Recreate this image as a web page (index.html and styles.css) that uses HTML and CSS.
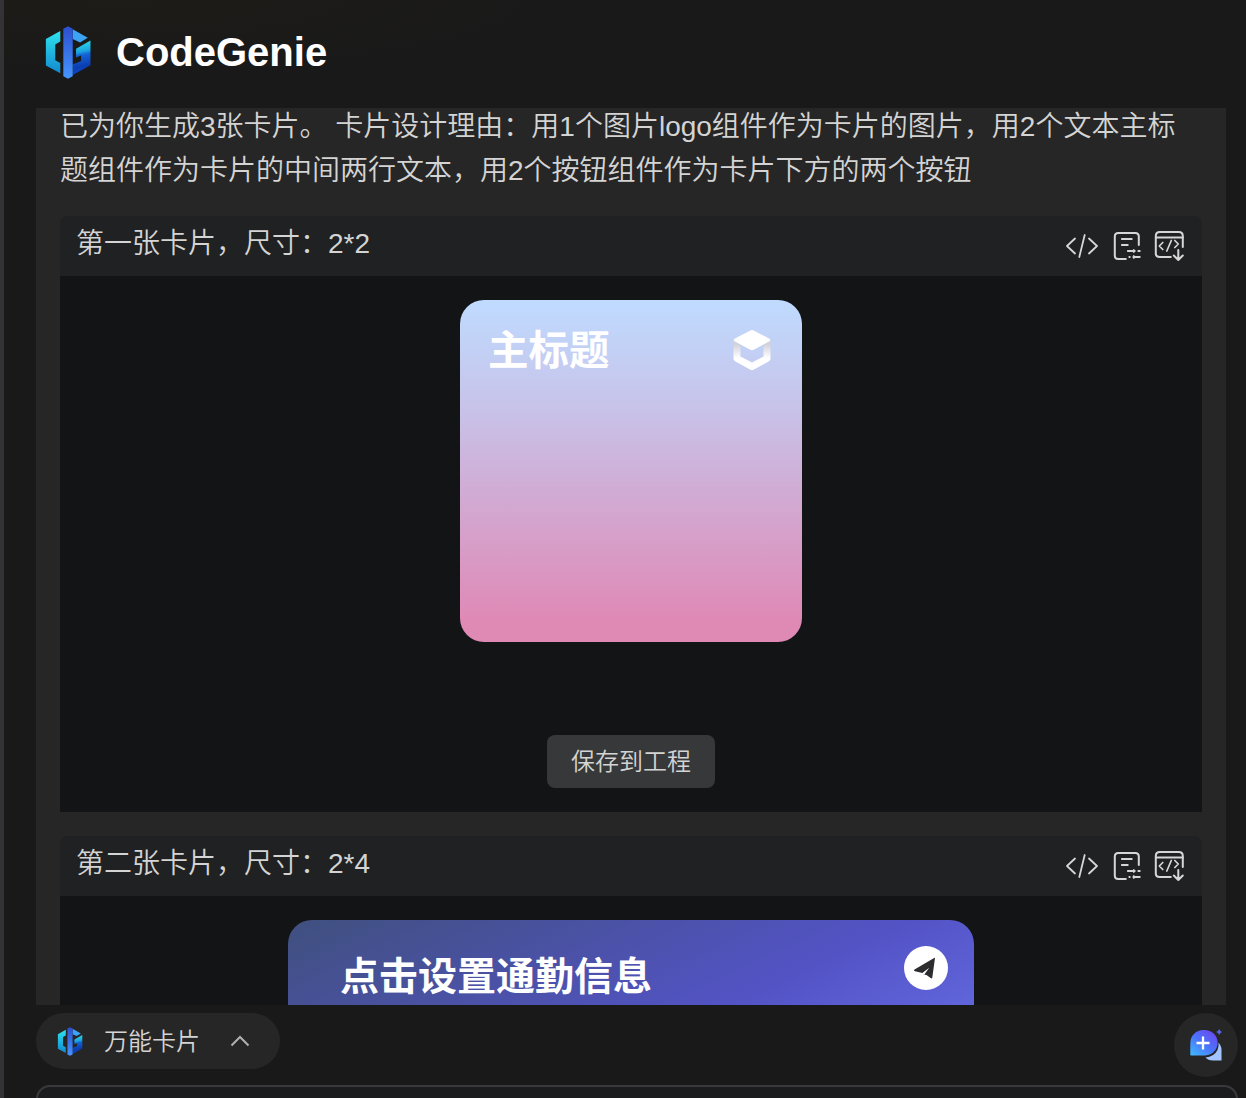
FILE: index.html
```html
<!DOCTYPE html>
<html lang="zh-CN">
<head>
<meta charset="utf-8">
<title>CodeGenie</title>
<link rel="stylesheet" href="styles.css">
</head>
<body>
<svg class="defs" width="0" height="0" aria-hidden="true">
  <defs>
    <linearGradient id="g-left" x1="0" y1="0" x2="0" y2="1"><stop offset="0" stop-color="#2fe3ee"/><stop offset="1" stop-color="#1189cf"/></linearGradient>
    <linearGradient id="g-bar" x1="0" y1="0" x2="0" y2="1"><stop offset="0" stop-color="#2b4fd0"/><stop offset="1" stop-color="#4596ff"/></linearGradient>
    <linearGradient id="g-right" x1=".5" y1="0" x2=".6" y2="1"><stop offset="0" stop-color="#2ee0ec"/><stop offset=".32" stop-color="#1ba2df"/><stop offset=".42" stop-color="#1263d8"/><stop offset=".75" stop-color="#0b3db0"/><stop offset="1" stop-color="#0d49cc"/></linearGradient>
    <linearGradient id="g-chat" x1=".1" y1="1" x2=".85" y2=".05"><stop offset="0" stop-color="#42b5ff"/><stop offset=".5" stop-color="#4a74fa"/><stop offset="1" stop-color="#6d48f0"/></linearGradient>
    <linearGradient id="g-cube" x1="0" y1="0" x2="0" y2="1"><stop offset="0" stop-color="#d2d2da"/><stop offset=".15" stop-color="#d2d2da"/><stop offset=".6" stop-color="#fff"/></linearGradient>
    <symbol id="logo" viewBox="136 78 136 158">
      <path fill="url(#g-left)" d="M138 117 181 93V124L166 133V180L181 188V219L138 196Z"/>
      <path fill="#3da4f5" d="M218 88 263 113 240 127 218 117Z"/>
      <path fill="url(#g-right)" d="M271 121V195L218 224V193L243 182V166L228 172V146Z"/>
      <path fill="url(#g-bar)" d="M190 86 204 79 218 86V228L204 235 190 228Z"/>
    </symbol>
    <symbol id="tools" viewBox="0 0 120 32">
      <g fill="none" stroke="#d6d6d6" stroke-width="2" stroke-linecap="round" stroke-linejoin="round">
        <path d="M10 8.5 2 16 10 23.500M24 8.500 32 16 24 23.500M19.700 5 14.300 27" stroke-width="1.800"/>
        <g transform="translate(.8 0)">
          <path d="M73 15V6.500Q73 3 69.500 3H52.500Q49 3 49 6.500V25.500Q49 29 52.500 29H60"/>
          <path d="M56 9H66M56 15H62M62 21H69M72.500 21H74M63.500 27H64M67.500 27H74" stroke-width="1.800"/>
          <path d="M68 19.700V22.300M68 25.700V28.300" stroke-width="1.500"/>
          <path d="M117 17V6Q117 2 113 2H94Q90 2 90 6V23.500Q90 27 94 27H105"/>
          <path d="M90 7.500H117" stroke-width="1.800"/>
          <path d="M97 12.500 93.500 16 97 19.500M109 10.500 112.500 14 109 17.500M105.500 10.500 101 21" stroke-width="1.700"/>
          <path d="M112.500 20V30M108 25.500 112.500 30 117 25.500"/>
        </g>
      </g>
    </symbol>
  </defs>
</svg>
<div class="app">
  <header class="header">
    <svg class="header-logo"><use href="#logo"/></svg>
    <h1 class="brand">CodeGenie</h1>
  </header>
  <main class="chat">
    <p class="message">已为你生成3张卡片。 卡片设计理由：用1个图片logo组件作为卡片的图片，用2个文本主标题组件作为卡片的中间两行文本，用2个按钮组件作为卡片下方的两个按钮</p>
    <section class="result">
      <div class="result-head"><span>第一张卡片，尺寸：2*2</span><svg class="tools"><use href="#tools"/></svg></div>
      <div class="result-body">
        <div class="card card-small">
          <span class="card-title">主标题</span>
          <svg class="cube" viewBox="0 0 38 42"><path fill="url(#g-cube)" d="M.5 11 7.500 15.500V27.500L19 33.500 30.500 27.500V15.500L37.500 11V30Q37.500 31.500 36 32.300L21 40.500Q19 41.500 17 40.500L2 32.300Q.5 31.500.5 30Z"/><path fill="#fff" d="M17.300 1.500Q19 .6 20.700 1.500L36.500 9.800Q38 11 36.500 12.200L20.700 20.700Q19 21.600 17.300 20.700L1.500 12.200Q0 11 1.500 9.800Z"/></svg>
        </div>
        <button class="save">保存到工程</button>
      </div>
    </section>
    <section class="result">
      <div class="result-head"><span>第二张卡片，尺寸：2*4</span><svg class="tools"><use href="#tools"/></svg></div>
      <div class="result-body">
        <div class="card card-wide">
          <span class="card-title">点击设置通勤信息</span>
          <svg class="send" viewBox="0 0 44 44"><circle cx="22" cy="22" r="22" fill="#fff"/><path fill="#2d2d30" d="M31 12 28.300 31.500Q28 33 26.700 32L22.500 29 19.500 28.500 24.500 22.500 18.500 27 11 25.200Q9 24.500 10.500 23.500L29.700 12.200Q30.800 11.600 31 12Z"/><path fill="#fff" d="M20.500 28.200 25.200 21.700 18.800 27 20.500 30Z"/></svg>
        </div>
      </div>
    </section>
  </main>
  <footer class="footer">
    <div class="footer-bar">
      <button class="mode">
        <svg class="mode-logo"><use href="#logo"/></svg>
        <span class="mode-name">万能卡片</span>
        <svg class="chevron" viewBox="0 0 20 12"><path d="M1.500 10.500 10 2 18.500 10.500" fill="none" stroke="#b0b0b0" stroke-width="2"/></svg>
      </button>
      <button class="new-chat" aria-label="新建会话">
        <svg width="36" height="36" viewBox="0 0 36 36"><path fill="#a4c5ff" d="M30.500 13.500Q34 18 33.500 22V31.500H25Q20 31.500 17.500 28.500 26 28 29.500 21 31 17 30.500 13.500Z"/><path fill="url(#g-chat)" d="M15.500 1A13 12.800 0 1 1 15.500 26.500H3Q2.300 26.500 2.300 25.800V14A13 13 0 0 1 15.500 1Z"/><path d="M15 7.500V20.500M8.500 14H21.500" stroke="#fff" stroke-width="2.300"/><path fill="#5365e8" d="M31.200 0 32.400 1.900 34.200 3 32.400 4.100 31.200 6 30 4.100 28.200 3 30 1.900Z"/></svg>
      </button>
    </div>
    <div class="composer"></div>
  </footer>
</div>
</body>
</html>
```
FILE: styles.css
```css
* { box-sizing: border-box; }
body {
  margin: 0;
  background: #191919;
  color: #d4d4d4;
  font-family: "Liberation Sans", "Noto Sans CJK SC", sans-serif;
  overflow: hidden;
}
svg { display: block; flex: none; }
button { border: 0; padding: 0; font: inherit; color: inherit; }
.defs { position: absolute; }
.app {
  height: 1098px;
  display: flex;
  flex-direction: column;
  border-left: 4px solid #333335;
}
.header {
  flex: none;
  height: 108px;
  padding: 26px 0 0 41px;
  display: flex;
  align-items: flex-start;
  gap: 25px;
  background: radial-gradient(ellipse 420px 70px at 120px 0, #1d1c18, #191919);
}
.header-logo { width: 46px; height: 53px; }
.brand { margin: 3px 0 0; font-size: 40px; line-height: 46px; color: #fff; }
.chat {
  flex: none;
  height: 897px;
  overflow: hidden;
  margin: 0 20px 0 32px;
  padding: 0 24px;
  background: #262626;
}
.message {
  margin: -3px 0 23px;
  font-size: 28px;
  line-height: 44px;
  font-weight: 350;
}
.result { margin-bottom: 24px; border-radius: 8px 8px 0 0; overflow: hidden; }
.result-head {
  height: 60px;
  padding: 0 17px 0 16px;
  display: flex;
  justify-content: space-between;
  background: #202122;
  font-size: 28px;
  line-height: 56px;
  font-weight: 350;
}
.tools { width: 120px; height: 32px; margin-top: 14px; }
.result-body {
  height: 536px;
  padding: 24px 0;
  display: flex;
  flex-direction: column;
  align-items: center;
  justify-content: space-between;
  background: #131416;
}
.card {
  display: flex;
  justify-content: space-between;
  align-items: flex-start;
  border-radius: 24px;
  color: #fff;
  font-weight: 700;
}
.card-small {
  width: 342px;
  height: 342px;
  padding: 29px 31px 0 28px;
  font-size: 40.500px;
  line-height: 44px;
  background: linear-gradient(#bfdbff, #c7c4ea 30%, #df89b5 94%);
}
.cube { width: 38px; height: 42px; }
.card-wide {
  width: 686px;
  height: 342px;
  padding: 26px 26px 0 52px;
  font-size: 39px;
  line-height: 62px;
  background: linear-gradient(155deg, #40507f 0, #5353c5 44%, #6166dc 62%);
}
.send { width: 44px; height: 44px; }
.save {
  width: 168px;
  height: 53px;
  border-radius: 8px;
  background: #373839;
  font-size: 24px;
  line-height: 53px;
  font-weight: 350;
}
.footer { flex: 1; padding: 8px 8px 0 32px; }
.footer-bar { display: flex; justify-content: space-between; height: 72px; }
.mode {
  width: 244px;
  height: 56px;
  padding: 0 30px 0 21px;
  display: flex;
  align-items: center;
  border-radius: 28px;
  background: #262626;
  font-size: 24px;
  font-weight: 350;
}
.mode-logo { width: 26px; height: 29px; margin-right: 21px; }
.mode-name { padding-bottom: 4px; }
.chevron { width: 20px; height: 12px; margin-left: auto; }
.new-chat {
  width: 64px;
  height: 64px;
  padding-top: 3px;
  display: grid;
  place-items: center;
  border-radius: 50%;
  background: #262626;
}
.composer { height: 60px; border: 2px solid #39393b; border-radius: 14px; background: #1b1c1e; }
```
